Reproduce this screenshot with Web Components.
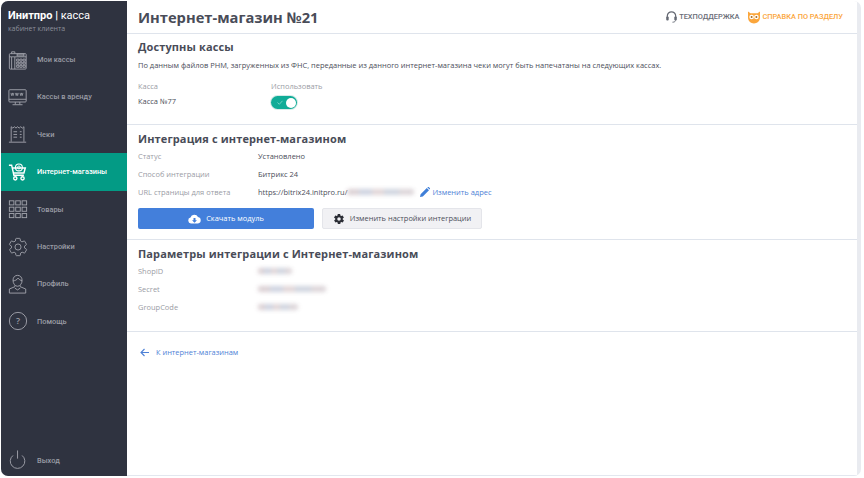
<!DOCTYPE html>
<html lang="ru">
<head>
<meta charset="utf-8"/>
<title>Интернет-магазин №21</title>
<style>
  html, body { margin: 0; height: 100%; background: #fff; }
  body { font-family: "Open Sans", sans-serif; overflow: hidden; }
</style>
</head>
<body>
<app-shell>
  <side-bar slot="side">
    <nav-item icon="phone">Мои кассы</nav-item>
    <nav-item icon="www">Кассы в аренду</nav-item>
    <nav-item icon="receipt">Чеки</nav-item>
    <nav-item icon="cart" active>Интернет-магазины</nav-item>
    <nav-item icon="grid">Товары</nav-item>
    <nav-item icon="gear">Настройки</nav-item>
    <nav-item icon="user">Профиль</nav-item>
    <nav-item icon="help">Помощь</nav-item>
    <nav-item icon="power" slot="bottom">Выход</nav-item>
  </side-bar>
  <top-bar slot="top" heading="Интернет-магазин №21"></top-bar>

  <page-section heading="Доступны кассы" style="--pad-top:5px;--pad-bottom:15px">
    <p class="lead">По данным файлов РНМ, загруженных из ФНС, переданные из данного интернет-магазина чеки могут быть напечатаны на следующих кассах.</p>
    <kkt-table></kkt-table>
  </page-section>

  <page-section heading="Интеграция с интернет-магазином" style="--pad-bottom:10px">
    <info-row label="Статус">Установлено</info-row>
    <info-row label="Способ интеграции">Битрикс 24</info-row>
    <info-row label="URL страницы для ответа">https://bitrix24.initpro.ru/<blur-text w="67"></blur-text><edit-link>Изменить адрес</edit-link></info-row>
    <action-row></action-row>
  </page-section>

  <page-section heading="Параметры интеграции с Интернет-магазином" style="--pad-bottom:15px">
    <info-row label="ShopID"><blur-text w="34"></blur-text></info-row>
    <info-row label="Secret"><blur-text w="68"></blur-text></info-row>
    <info-row label="GroupCode"><blur-text w="40"></blur-text></info-row>
  </page-section>

  <back-link>К интернет-магазинам</back-link>
</app-shell>

<script>
const ICONS = {
  phone: '<rect x="1.500" y="4" width="18.500" height="17" rx="1"/><path d="M4 4V2h3.500v2M4 21V7.500h3.500V21M1.500 7.500H4M7.500 7.500H20"/><rect x="10" y="4.500" width="7.500" height="2" /><path d="M9.500 10h2.500v2.200H9.500zM13 10h2.500v2.200H13zM16.500 10H19v2.200h-2.500zM9.500 13.400h2.500v2.200H9.500zM13 13.400h2.500v2.200H13zM16.500 13.400H19v2.200h-2.500zM9.500 16.800h2.500V19H9.500zM13 16.800h2.500V19H13zM16.500 16.800H19V19h-2.500z"/>',
  www: '<rect x="1" y="3" width="19" height="13.500" rx="1"/><path d="M1 13.500h19M8 16.500v2.500M13 16.500v2.500M5 19.500h11"/><path d="M3.200 6.500l.8 3 .8-3 .8 3 .8-3M8.200 6.500l.8 3 .8-3 .8 3 .8-3M13.200 6.500l.8 3 .8-3 .8 3 .8-3" stroke-width=".8"/>',
  receipt: '<path d="M3.500 19.500V3l1.800 1.500L7 3l1.800 1.500L10.500 3l1.800 1.500L14 3l1.800 1.500 1.700-1.500v16.500M1 20h19"/><path d="M6 8.500h4M6 11.500h4M6 14.500h4M13 8.500h2M13 11.500h2M13 14.500h2"/>',
  cart: '<path d="M1 3.500h3l2.500 11h11" stroke-width="1.600"/><path d="M5 6.500h14l-1.500 5.500H6.500" stroke-width="1.600"/><circle cx="8" cy="18" r="1.800" stroke-width="1.500"/><circle cx="16" cy="18" r="1.800" stroke-width="1.500"/><circle cx="12" cy="6" r="3.800" stroke-width="1.200"/><circle cx="12" cy="6" r="1.600" stroke-width="1"/>',
  grid: '<rect x="1.500" y="2" width="5" height="4.500"/><rect x="8.500" y="2" width="5" height="4.500"/><rect x="15.500" y="2" width="5" height="4.500"/><rect x="1.500" y="9" width="5" height="4.500"/><rect x="8.500" y="9" width="5" height="4.500"/><rect x="15.500" y="9" width="5" height="4.500"/><rect x="1.500" y="16" width="5" height="4.500"/><rect x="8.500" y="16" width="5" height="4.500"/><rect x="15.500" y="16" width="5" height="4.500"/>',
  gear: '<g transform="translate(-.5 -.5) scale(.96)"><path d="M19.400 13c.1-.3.100-.7.100-1s0-.7-.1-1l2.100-1.600c.2-.2.200-.4.100-.6l-2-3.500c-.1-.2-.4-.3-.6-.2l-2.500 1c-.5-.4-1.100-.7-1.700-1l-.4-2.600c0-.3-.2-.4-.5-.4h-4c-.2 0-.4.200-.5.400l-.4 2.600c-.6.300-1.200.6-1.700 1l-2.500-1c-.2-.1-.5 0-.6.200l-2 3.500c-.1.200-.1.400.1.600L4.600 11c-.1.300-.1.700-.1 1s0 .7.100 1l-2.100 1.600c-.2.200-.2.400-.1.600l2 3.500c.1.200.4.300.6.200l2.500-1c.5.400 1.100.7 1.700 1l.4 2.600c.1.200.3.400.5.400h4c.3 0 .5-.2.500-.4l.4-2.600c.6-.3 1.200-.6 1.700-1l2.500 1c.2.100.5 0 .6-.2l2-3.500c.1-.2.100-.4-.1-.6z"/><circle cx="12" cy="12" r="3.500"/></g>',
  user: '<path d="M5.500 7c0-3.500 2.200-5.500 5-5.500s5 2 5 5.500c0 3.500-2.300 6.500-5 6.500s-5-3-5-6.500z"/><path d="M5.500 7.500c2 0 4.500-1 5.500-3 1 1.500 2.500 2.500 4.500 3"/><path d="M7.500 12.500v1.500L1.500 16.500v4.500h18v-4.500L13.500 14v-1.500"/><path d="M7.500 15.500l3 2 3-2"/>',
  help: '<circle cx="11" cy="11" r="9.500"/><text x="11" y="14.500" text-anchor="middle" font-family="Open Sans" font-size="10" font-weight="600" fill="currentColor" stroke="none">?</text>',
  power: '<path d="M5.500 6a8 8 0 1 0 10 0"/><path d="M10.500 .5v9"/>'
};

class AppShell extends HTMLElement {
  constructor() {
    super();
    this.attachShadow({ mode: 'open' }).innerHTML = `
      <style>
        :host { display: grid; grid-template-columns: 126px 730px; width: 860px; height: 475px;
          margin: 1px 0 0 1px; background: #e9ebf0; border-radius: 7px; overflow: hidden; }
        .main { display: flex; flex-direction: column; min-width: 0; background: #fff;
          border-bottom: 1px solid #e3e7ef; }
      </style>
      <slot name="side"></slot>
      <div class="main"><slot name="top"></slot><slot></slot></div>`;
  }
}

class SideBar extends HTMLElement {
  constructor() {
    super();
    this.attachShadow({ mode: 'open' }).innerHTML = `
      <style>
        :host { display: flex; flex-direction: column; background: #2f3340; color: #fff; }
        .logo { height: 40px; box-sizing: border-box; padding: 8px 0 0 7px; }
        .name { font: 700 11px/14px "Roboto", sans-serif; color: #fff; white-space: nowrap; }
        .name span { font-weight: 400; }
        .sub { font: 400 7px/10px "Open Sans", sans-serif; color: #8d909b; margin-top: 1px; }
        .list { display: flex; flex-direction: column; flex: 1; }
        .bottom { margin-top: auto; margin-bottom: -3px; }
      </style>
      <div class="logo">
        <div class="name">Инитпро | <span>касса</span></div>
        <div class="sub">кабинет клиента</div>
      </div>
      <div class="list"><slot></slot><div class="bottom"><slot name="bottom"></slot></div></div>`;
  }
}

class NavItem extends HTMLElement {
  constructor() {
    super();
    const icon = this.getAttribute('icon');
    this.attachShadow({ mode: 'open' }).innerHTML = `
      <style>
        :host { display: flex; align-items: center; height: 37.400px; padding-left: 7px; gap: 9px;
          font: 500 7.400px/1 "Roboto", sans-serif; color: #9a9ca5; box-sizing: border-box; }
        :host([active]) { background: #039b85; color: #fff; }
        svg { width: 20px; height: 20px; flex: none; fill: none; stroke: #a3a5ad; stroke-width: 1; }
        :host([active]) svg { stroke: #fff; }
      </style>
      <svg viewBox="0 0 22 22">${ICONS[icon]}</svg>
      <slot></slot>`;
  }
}

class TopBar extends HTMLElement {
  constructor() {
    super();
    this.attachShadow({ mode: 'open' }).innerHTML = `
      <style>
        :host { display: flex; align-items: center; height: 32px; padding: 0 14px 0 11px;
          border-bottom: 1px solid #dfe4ec; box-sizing: content-box; }
        h1 { margin: 0; font: 700 14.700px/1 "Open Sans", sans-serif; color: #494c58; flex: 1; }
        .link { display: flex; align-items: center; gap: 3px; font: 500 7.400px/1 "Roboto", sans-serif; }
        .help { color: #6a6d78; margin-right: 9px; gap: 2px; }
        .docs { color: #fba63c; gap: 2px; }
        svg { display: block; }
      </style>
      <h1>${this.getAttribute('heading')}</h1>
      <span class="link help">
        <svg width="11" height="12" viewBox="0 0 11 12" fill="none" stroke="#666a74">
          <path d="M1.300 7V5a4.200 4.200 0 0 1 8.400 0v2" stroke-width="1.200"/>
          <rect x=".2" y="5.500" width="2.500" height="4" rx="1" fill="#666a74" stroke="none"/>
          <rect x="8.300" y="5.500" width="2.500" height="4" rx="1" fill="#666a74" stroke="none"/>
          <path d="M9.500 9.500c0 1-1.500 1.700-3 1.700"/>
        </svg>ТЕХПОДДЕРЖКА</span>
      <span class="link docs">
        <svg width="12" height="13" viewBox="0 0 12 13">
          <path d="M0 .5l2.500 1.800h7L12 .5v5.500c.3 3.500-2.500 6.500-6 6.500S-.3 9.500 0 6z" fill="#fba63c"/>
          <circle cx="3.600" cy="6" r="2.300" fill="#fff"/><circle cx="8.400" cy="6" r="2.300" fill="#fff"/>
          <circle cx="3.600" cy="6" r="1" fill="#a86a1a"/><circle cx="8.400" cy="6" r="1" fill="#a86a1a"/>
        </svg>СПРАВКА ПО РАЗДЕЛУ</span>`;
  }
}

class PageSection extends HTMLElement {
  constructor() {
    super();
    this.attachShadow({ mode: 'open' }).innerHTML = `
      <style>
        :host { display: block; padding: var(--pad-top, 6px) 11px var(--pad-bottom, 12px); border-bottom: 1px solid #dfe4ec; }
        h2 { margin: 0; font: 700 11px/16px "Open Sans", sans-serif; color: #494c58; letter-spacing: .12px; }
        ::slotted(p) { margin: 4px 0 9px; font: 400 7.470px/12px "Open Sans", sans-serif; color: #4b4e59; }
      </style>
      <h2>${this.getAttribute('heading')}</h2>
      <slot></slot>`;
  }
}

class KktTable extends HTMLElement {
  constructor() {
    super();
    this.attachShadow({ mode: 'open' }).innerHTML = `
      <style>
        :host { display: grid; grid-template-columns: 133px 1fr; row-gap: 3px; align-items: start;
          font: 400 7.470px/12px "Open Sans", sans-serif; color: #9a9ca5; }
        .v { color: #4b4e59; }
        toggle-switch { margin-top: 1px; }
      </style>
      <div>Касса</div><div>Использовать</div>
      <div class="v">Касса №77</div><div><toggle-switch></toggle-switch></div>`;
  }
}

class ToggleSwitch extends HTMLElement {
  constructor() {
    super();
    this.attachShadow({ mode: 'open' }).innerHTML = `
      <style>
        :host { display: flex; align-items: center; justify-content: flex-end; width: 26px; height: 13px;
          background: #10ac97; border-radius: 7px; padding: 1px; box-sizing: border-box; position: relative;
          box-shadow: 0 0 0 1px #d6ebe8; }
        i { width: 10px; height: 10px; border-radius: 50%; background: #fff; }
        svg { position: absolute; left: 6px; top: 4px; }
      </style>
      <svg width="6" height="5" viewBox="0 0 6 5" fill="none" stroke="#6fd1c3"><path d="M.5 2.500l1.800 1.800L5.500.8"/></svg>
      <i></i>`;
  }
}

class InfoRow extends HTMLElement {
  constructor() {
    super();
    this.attachShadow({ mode: 'open' }).innerHTML = `
      <style>
        :host { display: grid; grid-template-columns: 120px 1fr; height: 18px; align-items: center;
          font: 400 7.470px/12px "Open Sans", sans-serif; color: #4b4e59; }
        .k { color: #9a9ca5; }
        .v { display: flex; align-items: center; white-space: nowrap; }
      </style>
      <div class="k">${this.getAttribute('label')}</div>
      <div class="v"><slot></slot></div>`;
  }
}

class BlurText extends HTMLElement {
  constructor() {
    super();
    this.attachShadow({ mode: 'open' }).innerHTML = `
      <style>
        :host { display: inline-block; width: ${this.getAttribute('w')}px; height: 6px;
          background: linear-gradient(90deg, #bda9b0 0 18%, #a5aec6 18% 37%, #c9b3b6 37% 55%, #a7b1c4 55% 78%, #bfb2b9 78%);
          opacity: .55; filter: blur(2px); border-radius: 2px; }
      </style>`;
  }
}

class EditLink extends HTMLElement {
  constructor() {
    super();
    this.attachShadow({ mode: 'open' }).innerHTML = `
      <style>
        :host { display: inline-flex; align-items: center; gap: 2px; color: #4e81d6; margin-left: 6px; }
      </style>
      <svg width="10" height="10" viewBox="0 0 10 10"><path d="M0 10l.6-2.800L6.800 1l2.200 2.200L2.800 9.400zM7.400.4l.5-.4c.3-.2.6-.2.8 0l1.300 1.300c.2.2.2.5 0 .8l-.4.5z" fill="#3f7fd8"/></svg>
      <slot></slot>`;
  }
}

class ActionRow extends HTMLElement {
  constructor() {
    super();
    this.attachShadow({ mode: 'open' }).innerHTML = `
      <style>
        :host { display: flex; gap: 8px; margin-top: 7px;
          font: 400 7.450px/1 "Open Sans", sans-serif; }
        div { display: flex; align-items: center; justify-content: center; gap: 5px; height: 21px; border-radius: 2px; }
        .main { width: 176px; background: #437fdb; color: #fff; }
        .alt { width: 160px; background: #f1f1f4; color: #4b4e59; border: 1px solid #e4e5ea; box-sizing: border-box; }
      </style>
      <div class="main">
        <svg width="13" height="10" viewBox="0 0 13 10"><path d="M3 9.500a3 3 0 0 1-.5-5.900A4 4 0 0 1 10 3a3.300 3.300 0 0 1 0 6.500z" fill="#fff"/><path d="M5.500 4h2v2.300H9L6.500 8.800 4 6.300h1.500z" fill="#437fdb"/></svg>
        Скачать модуль</div>
      <div class="alt">
        <svg width="12" height="12" viewBox="0 0 24 24"><path fill="#2b2d35" d="M19.400 13c.1-.3.100-.7.100-1s0-.7-.1-1l2.100-1.600c.2-.2.200-.4.100-.6l-2-3.500c-.1-.2-.4-.3-.6-.2l-2.500 1c-.5-.4-1.100-.7-1.700-1l-.4-2.600c0-.3-.2-.4-.5-.4h-4c-.2 0-.4.200-.5.400l-.4 2.600c-.6.300-1.200.6-1.700 1l-2.500-1c-.2-.1-.5 0-.6.200l-2 3.500c-.1.200-.1.400.1.600L4.600 11c-.1.300-.1.700-.1 1s0 .7.100 1l-2.100 1.600c-.2.200-.2.400-.1.600l2 3.500c.1.200.4.300.6.200l2.500-1c.5.400 1.100.7 1.700 1l.4 2.600c.1.200.3.400.5.400h4c.3 0 .5-.2.500-.4l.4-2.600c.6-.3 1.200-.6 1.700-1l2.500 1c.2.100.5 0 .6-.2l2-3.500c.1-.2.100-.4-.1-.6zM12 15.500a3.500 3.500 0 1 1 0-7 3.500 3.500 0 0 1 0 7z"/></svg>
        Изменить настройки интеграции</div>`;
  }
}

class BackLink extends HTMLElement {
  constructor() {
    super();
    this.attachShadow({ mode: 'open' }).innerHTML = `
      <style>
        :host { display: flex; align-items: center; gap: 7px; padding: 14px 0 0 13px;
          font: 400 7.430px/12px "Open Sans", sans-serif; color: #4e81d6; }
      </style>
      <svg width="9" height="9" viewBox="0 0 9 9" fill="none" stroke="#4e81d6" stroke-width="1.100"><path d="M9 4.500H1M4.500 1L1 4.500 4.500 8"/></svg>
      <slot></slot>`;
  }
}

customElements.define('app-shell', AppShell);
customElements.define('side-bar', SideBar);
customElements.define('nav-item', NavItem);
customElements.define('top-bar', TopBar);
customElements.define('page-section', PageSection);
customElements.define('kkt-table', KktTable);
customElements.define('toggle-switch', ToggleSwitch);
customElements.define('info-row', InfoRow);
customElements.define('blur-text', BlurText);
customElements.define('edit-link', EditLink);
customElements.define('action-row', ActionRow);
customElements.define('back-link', BackLink);
</script>
</body>
</html>
